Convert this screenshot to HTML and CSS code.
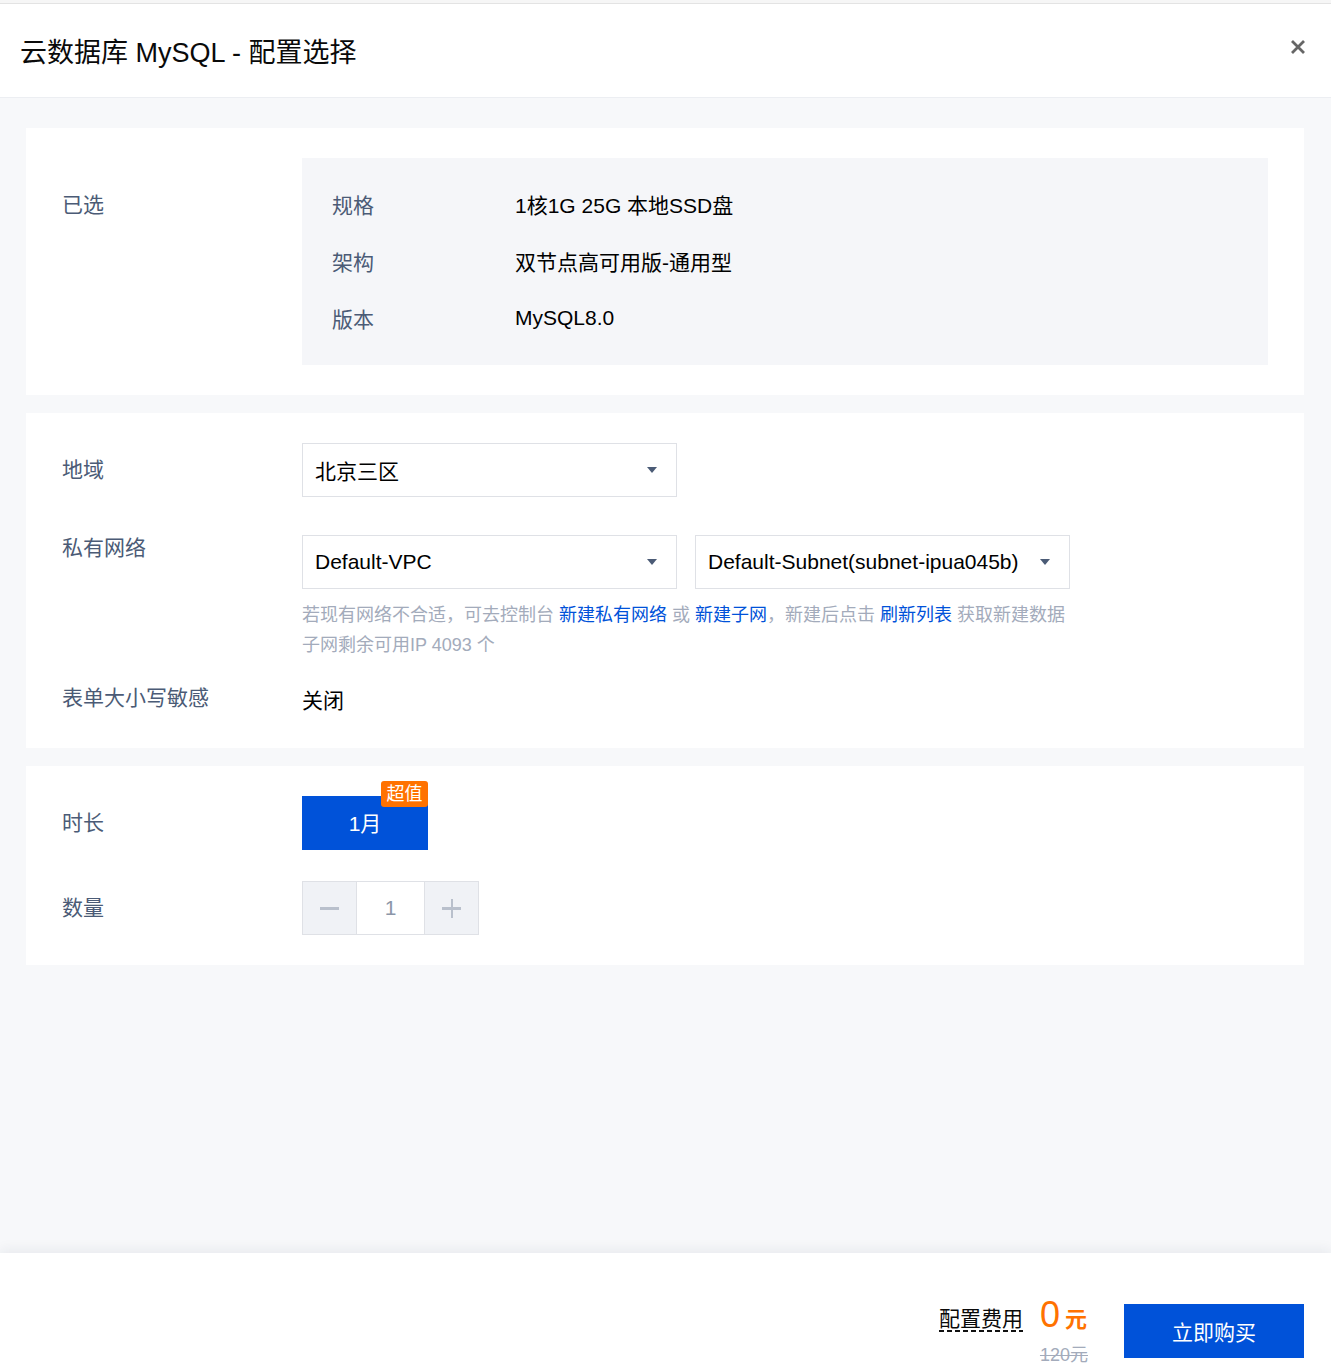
FILE: index.html
```html
<!DOCTYPE html>
<html lang="zh-CN">
<head>
<meta charset="utf-8">
<title>云数据库 MySQL - 配置选择</title>
<link rel="stylesheet" href="styles.css">
</head>
<body>
<div class="app">
  <div class="topbar"></div>
  <header class="dialog-head">
    <h1 class="dialog-title">云数据库 MySQL - 配置选择</h1>
    <button class="close-btn" type="button" aria-label="关闭">
      <svg width="16" height="16" viewBox="0 0 16 16" aria-hidden="true">
        <path d="M2 2 L14 14 M14 2 L2 14" stroke="#666" stroke-width="2.8" fill="none"/>
      </svg>
    </button>
  </header>

  <main class="dialog-body">
    <!-- selected configuration summary -->
    <section class="card">
      <div class="form-row">
        <div class="form-label label-summary">已选</div>
        <dl class="summary">
          <div class="summary-row"><dt>规格</dt><dd>1核1G 25G 本地SSD盘</dd></div>
          <div class="summary-row"><dt>架构</dt><dd>双节点高可用版-通用型</dd></div>
          <div class="summary-row"><dt>版本</dt><dd>MySQL8.0</dd></div>
        </dl>
      </div>
    </section>

    <!-- region and network -->
    <section class="card">
      <div class="form-row row-region">
        <div class="form-label">地域</div>
        <div class="form-control">
          <div class="select"><span>北京三区</span><i class="caret"></i></div>
        </div>
      </div>
      <div class="form-row row-vpc">
        <div class="form-label">私有网络</div>
        <div class="form-control">
          <div class="selects">
            <div class="select"><span>Default-VPC</span><i class="caret"></i></div>
            <div class="select"><span>Default-Subnet(subnet-ipua045b)</span><i class="caret"></i></div>
          </div>
          <p class="help">若现有网络不合适，可去控制台 <a href="#">新建私有网络</a> 或 <a href="#">新建子网</a>，新建后点击 <a href="#">刷新列表</a> 获取新建数据<br>子网剩余可用IP 4093 个</p>
        </div>
      </div>
      <div class="form-row row-case">
        <div class="form-label">表单大小写敏感</div>
        <div class="form-control form-text">关闭</div>
      </div>
    </section>

    <!-- billing period and quantity -->
    <section class="card">
      <div class="form-row row-time">
        <div class="form-label">时长</div>
        <div class="form-control">
          <button class="dur-btn" type="button">1月<span class="badge">超值</span></button>
        </div>
      </div>
      <div class="form-row row-qty">
        <div class="form-label">数量</div>
        <div class="form-control">
          <div class="stepper">
            <span class="step-btn"><i class="minus"></i></span>
            <span class="step-value">1</span>
            <span class="step-btn"><i class="plus"></i></span>
          </div>
        </div>
      </div>
    </section>
  </main>

  <footer class="dialog-foot">
    <div class="price-block">
      <span class="price-label">配置费用</span>
      <div class="price-col">
        <div class="price-now"><span class="num">0</span><span class="unit">元</span></div>
        <div class="price-old">120元</div>
      </div>
    </div>
    <button class="buy-btn" type="button">立即购买</button>
  </footer>
</div>
</body>
</html>
```

FILE: styles.css
```css
* {
  box-sizing: border-box;
}

html,
body {
  margin: 0;
  padding: 0;
}

body {
  font-family: "Liberation Sans", "Noto Sans CJK SC", sans-serif;
  font-size: 21px;
  color: #000;
  background: #fff;
}

.app {
  display: flex;
  flex-direction: column;
  min-height: 100vh;
}

.topbar {
  height: 3px;
  background: #f6f6f6;
}

/* header */
.dialog-head {
  display: flex;
  align-items: center;
  justify-content: space-between;
  height: 95px;
  padding: 0 25px 0 20px;
  border-top: 1px solid #e3e3e3;
  border-bottom: 1px solid #eceef2;
  background: #fff;
}

.dialog-title {
  margin: 0;
  font-size: 27px;
  font-weight: normal;
  line-height: 36px;
  color: #0a0a0a;
  margin-top: 4px;
}

.close-btn {
  border: 0;
  background: none;
  padding: 0;
  width: 16px;
  height: 16px;
  margin-bottom: 8px;
  cursor: pointer;
}

.close-btn svg {
  display: block;
}

/* body */
.dialog-body {
  flex: 1;
  background: #f7f8fa;
  padding: 30px 27px 30px 26px;
  display: flex;
  flex-direction: column;
  gap: 18px;
}

.card {
  background: #fff;
  padding: 30px 36px;
}

.form-row {
  display: flex;
  align-items: flex-start;
}

.form-label {
  width: 240px;
  flex-shrink: 0;
  color: #4b5b76;
}

.form-control {
  flex: 1;
}

/* summary */
.label-summary {
  margin-top: 18px;
  line-height: 57px;
}

.summary {
  flex: 1;
  margin: 0;
  padding: 17px 30px 19px;
  background: #f5f6f9;
}

.summary-row {
  display: flex;
  align-items: center;
  height: 57px;
}

.summary-row dt {
  width: 183px;
  color: #4b5b76;
}

.summary-row dd {
  margin: 0;
}

/* region / network */
.row-region .form-label {
  line-height: 54px;
}

.row-vpc {
  margin-top: 38px;
}

.row-vpc .form-label {
  line-height: 26px;
}

.row-case {
  margin-top: 24px;
}

.row-case .form-label {
  line-height: 28px;
}

.form-text {
  line-height: 34px;
}

.selects {
  display: flex;
  gap: 18px;
}

.select {
  width: 375px;
  height: 54px;
  border: 1px solid #dfe1e6;
  display: flex;
  align-items: center;
  justify-content: space-between;
  padding: 0 19px 0 12px;
  background: #fff;
}

.caret {
  width: 0;
  height: 0;
  border-left: 5.5px solid transparent;
  border-right: 5.5px solid transparent;
  border-top: 6px solid #4b5b76;
}

.help {
  margin: 11px 0 0;
  font-size: 18px;
  line-height: 30px;
  color: #a3abbb;
}

.help a {
  color: #0052d9;
  text-decoration: none;
}

/* duration */
.row-time .form-label,
.row-qty .form-label {
  line-height: 54px;
}

.dur-btn {
  position: relative;
  width: 126px;
  height: 54px;
  border: 0;
  padding: 0 0 3px;
  background: #0052d9;
  color: #fff;
  font: inherit;
  font-size: 21px;
  cursor: pointer;
}

.badge {
  position: absolute;
  top: -15px;
  right: 0;
  width: 47px;
  height: 26px;
  border-radius: 3px;
  background: #ff7200;
  color: #fff;
  font-size: 18px;
  line-height: 26px;
  text-align: center;
}

.row-qty {
  margin-top: 31px;
}

.stepper {
  display: inline-flex;
  height: 54px;
  border: 1px solid #dfe1e6;
}

.step-btn {
  width: 53px;
  background: #f0f2f6;
  display: flex;
  align-items: center;
  justify-content: center;
}

.step-value {
  width: 69px;
  border-left: 1px solid #dfe1e6;
  border-right: 1px solid #dfe1e6;
  display: flex;
  align-items: center;
  justify-content: center;
  color: #8c96a8;
}

.minus,
.plus {
  position: relative;
  width: 19px;
  height: 19px;
}

.minus::before,
.plus::before,
.plus::after {
  content: "";
  position: absolute;
  background: #b9c0cc;
}

.minus::before,
.plus::before {
  left: 0;
  right: 0;
  top: 8.5px;
  height: 2.5px;
}

.plus::after {
  top: 0;
  bottom: 0;
  left: 8.5px;
  width: 2.5px;
}

/* footer */
.dialog-foot {
  position: relative;
  z-index: 1;
  height: 118px;
  background: #fff;
  box-shadow: 0 -3px 12px rgba(30, 40, 70, 0.07);
  display: flex;
  justify-content: flex-end;
  align-items: flex-start;
  padding: 51px 27px 0 0;
}

.price-block {
  display: flex;
  align-items: flex-start;
  margin-right: 36px;
}

.price-label {
  margin-top: 3px;
  margin-right: 17px;
  line-height: 23px;
  padding-bottom: 2px;
  color: #0a0a0a;
  background-image: linear-gradient(to right, #111 0 5px, transparent 5px 8px);
  background-size: 8px 2px;
  background-repeat: repeat-x;
  background-position: 0 100%;
}

.price-col {
  margin-top: -7px;
}

.price-now {
  color: #ff7200;
  line-height: 36px;
  white-space: nowrap;
}

.price-now .num {
  font-size: 36px;
}

.price-now .unit {
  font-size: 22px;
  font-weight: bold;
  margin-left: 5px;
}

.price-old {
  margin-top: 6px;
  font-size: 18px;
  line-height: 22px;
  color: #a3abbb;
  text-decoration: line-through;
}

.buy-btn {
  width: 180px;
  height: 54px;
  border: 0;
  padding: 0;
  background: #0052d9;
  color: #fff;
  font: inherit;
  font-size: 21px;
  cursor: pointer;
}
```
